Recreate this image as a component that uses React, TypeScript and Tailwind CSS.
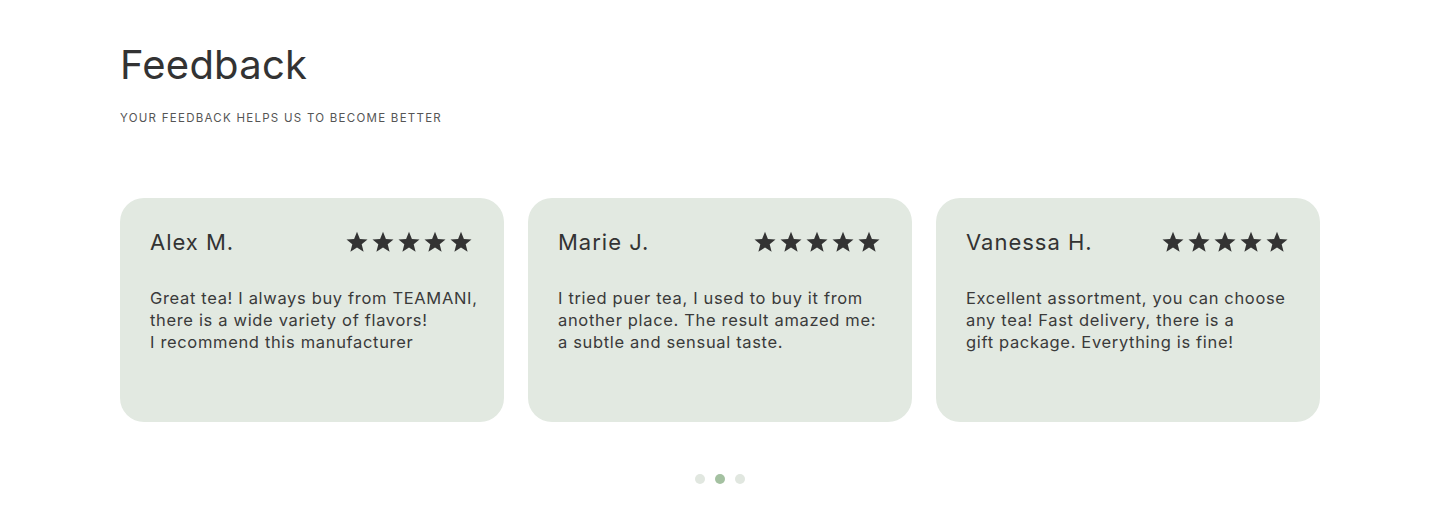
const reviews = [
  {
    name: "Alex M.",
    lines: ["Great tea! I always buy from TEAMANI,", "there is a wide variety of flavors!", "I recommend this manufacturer"],
  },
  {
    name: "Marie J.",
    lines: ["I tried puer tea, I used to buy it from", "another place. The result amazed me:", "a subtle and sensual taste."],
  },
  {
    name: "Vanessa H.",
    lines: ["Excellent assortment, you can choose", "any tea! Fast delivery, there is a", "gift package. Everything is fine!"],
  },
];

function Star() {
  return (
    <svg width="24" height="24" viewBox="0 0 24 24" className="fill-[#333333]">
      <path d="M12 1.8l2.9 7.1 7.6.5-5.8 4.9 1.9 7.4L12 17.6l-6.6 4.1 1.9-7.4-5.8-4.9 7.6-.5z" />
    </svg>
  );
}

export default function App() {
  return (
    <section className="min-h-[523px] bg-white px-[120px] pt-[40px] font-['Inter',sans-serif] text-[#333333]">
      <h1 className="text-[40px] leading-[50px] font-normal tracking-[0.006em]">Feedback</h1>
      <p className="mt-[20px] text-[11.5px] uppercase tracking-[0.11em] text-[#555555]">
        Your feedback helps us to become better
      </p>
      <div className="mt-[71px] grid grid-cols-3 gap-6">
        {reviews.map((review) => (
          <article key={review.name} className="h-[224px] rounded-[24px] bg-[#e2e9e1] px-[30px] pt-[29px]">
            <div className="flex items-center justify-between">
              <h3 className="text-[22px] leading-[30px] tracking-[0.045em]">{review.name}</h3>
              <div className="flex gap-[2px] pr-[1px]">
                {[0, 1, 2, 3, 4].map((i) => (
                  <Star key={i} />
                ))}
              </div>
            </div>
            <p className="mt-[30px] whitespace-nowrap text-[16.5px] leading-[22px] tracking-[0.04em] text-[#3a3a3a]">
              {review.lines.map((line) => (
                <span key={line} className="block">
                  {line}
                </span>
              ))}
            </p>
          </article>
        ))}
      </div>
      <div className="mt-[52px] flex justify-center gap-[10px]">
        <span className="h-[10px] w-[10px] rounded-full bg-[#e1e7e0]" />
        <span className="h-[10px] w-[10px] rounded-full bg-[#a4c1a1]" />
        <span className="h-[10px] w-[10px] rounded-full bg-[#e1e7e0]" />
      </div>
    </section>
  );
}
